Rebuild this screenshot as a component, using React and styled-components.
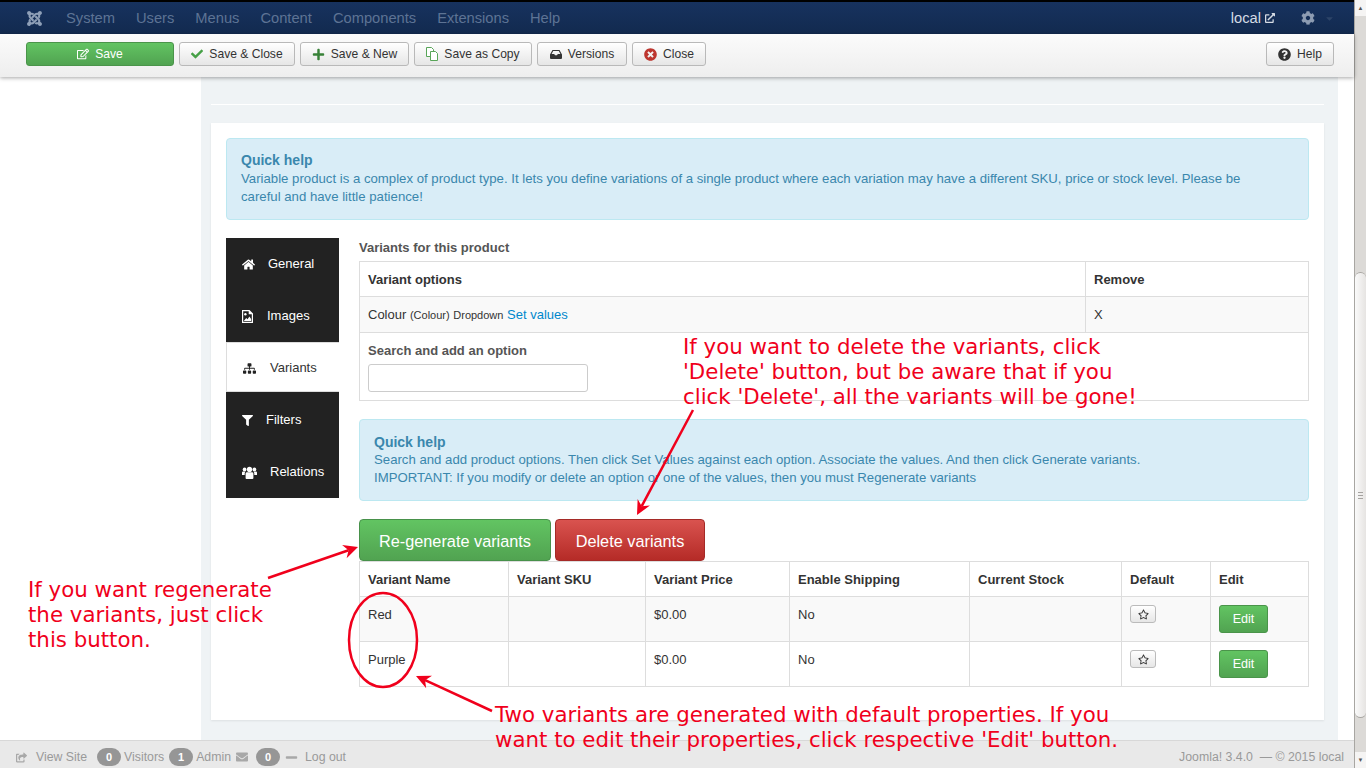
import React from 'react';
import styled, { createGlobalStyle } from 'styled-components';
import {
  FaJoomla, FaCheck, FaPlus, FaTimesCircle, FaQuestionCircle, FaCog,
  FaExternalLinkAlt, FaRegEdit, FaHome, FaSitemap, FaFilter,
  FaRegStar, FaEnvelope, FaMinus, FaShareSquare, FaCaretDown,
} from 'react-icons/fa';

const Global = createGlobalStyle`
html, body { margin: 0; padding: 0; height: 768px; overflow: hidden; background: #fff; }
body { font-family: "Liberation Sans", Arial, sans-serif; font-size: 13px; line-height: 18px; color: #333; }
* { box-sizing: border-box; }
`;

const Page = styled.div`
position: relative;
width: 1366px;
height: 768px;
display: flex;
overflow: hidden;
`;

const Column = styled.div`
width: 1354px;
height: 768px;
display: flex;
flex-direction: column;
`;

const Scrollbar = styled.div`
width: 12px;
height: 768px;
display: flex;
flex-direction: column;
background: #dcdad7;
border-left: 1px solid #a8a6a2;
`;
const ScrollButton = styled.div`
height: 16px;
flex: none;
background: #f5f4f3;
display: flex;
align-items: center;
justify-content: center;
color: #555;
font-size: 6px;
line-height: 1;
`;
const ScrollTrack = styled.div`
flex: 1;
padding: 256px 0 34px;
display: flex;
`;
const ScrollThumb = styled.div`
flex: 1;
border-radius: 6px;
border-top: 1px solid #a8a6a2;
border-bottom: 1px solid #a8a6a2;
background: linear-gradient(90deg, #fafafa, #e6e4e2);
display: flex;
flex-direction: column;
align-items: center;
justify-content: center;
gap: 2px;
`;
const Grip = styled.span`
width: 5px;
height: 1px;
background: #a5a3a0;
`;

const Nav = styled.div`
height: 34px;
flex: none;
border-top: 2px solid #000;
background: linear-gradient(#17325f, #122a4f);
display: flex;
align-items: center;
padding: 0 19px 0 26px;
color: #5d7394;
font-size: 14.7px;
`;
const NavMenu = styled.div`
display: flex;
gap: 21px;
margin-left: 23px;
flex: 1;
`;
const NavLogo = styled(FaJoomla)`
color: #8fa0b8;
font-size: 17px;
`;
const LocalLink = styled.span`
color: #d5dbe4;
display: flex;
align-items: center;
gap: 4px;
margin-right: 26px;
svg { font-size: 10px; }
`;
const NavCog = styled(FaCog)`
color: #8d9cb2;
font-size: 14px;
margin-right: 9px;
`;
const NavCaret = styled(FaCaretDown)`
color: #2c4468;
font-size: 11px;
`;

const Toolbar = styled.div`
height: 43px;
flex: none;
background: linear-gradient(#fbfbfb, #eeeeee);
box-shadow: 0 1px 4px rgba(0, 0, 0, .35);
display: flex;
align-items: center;
gap: 5px;
padding: 0 20px 3px 26px;
position: relative;
z-index: 2;
`;
const ToolButton = styled.div`
height: 24px;
width: ${p => p.$w}px;
display: flex;
align-items: center;
justify-content: center;
gap: 6px;
font-size: 12.1px;
color: ${p => p.$primary ? '#fff' : '#333'};
background: ${p => p.$primary ? 'linear-gradient(#62c462, #51a351)' : 'linear-gradient(#fff, #e6e6e6)'};
border: 1px solid ${p => p.$primary ? '#4a944a' : '#b9b9b9'};
border-radius: 3px;
margin-left: ${p => p.$push ? 'auto' : '0'};
`;
const ToolIcon = styled.span`
display: flex;
font-size: ${p => p.$size || 12}px;
color: ${p => p.$color || 'inherit'};
`;

const Body = styled.div`
flex: 1;
display: flex;
min-height: 0;
`;
const Side = styled.div`
width: 201px;
flex: none;
`;
const Content = styled.div`
width: 1137px;
flex: none;
background: #eff3f5;
padding: 27px 14px 0 10px;
display: flex;
flex-direction: column;
`;
const Rule = styled.div`
height: 1px;
background: #fff;
margin-bottom: 18px;
`;
const Panel = styled.div`
background: #fff;
height: 597px;
padding: 15px;
box-shadow: 0 1px 2px rgba(0, 0, 0, .08);
`;
const Help = styled.div`
background: #d9edf7;
border: 1px solid #bce8f1;
border-radius: 4px;
color: #3a87ad;
padding: ${p => p.$small ? '13px' : '11px'} 35px 0 14px;
height: 82px;
`;
const HelpTitle = styled.div`
font-weight: bold;
font-size: 14px;
line-height: ${p => p.$small ? 18 : 20}px;
`;
const HelpText = styled.div`
font-size: 13.2px;
line-height: 18px;
`;
const Tabbed = styled.div`
display: flex;
gap: 20px;
margin-top: 18px;
`;
const Tabs = styled.div`
width: 113px;
height: 260px;
flex: none;
background: #222;
display: flex;
flex-direction: column;
`;
const Tab = styled.div`
height: ${p => p.$h || 52}px;
display: flex;
align-items: center;
padding: ${p => p.$h ? '2px' : '0'} 0 0 16px;
font-size: 13px;
color: ${p => p.$active ? '#333' : '#fff'};
background: ${p => p.$active ? '#fff' : 'transparent'};
border: ${p => p.$active ? '1px solid #ddd' : 'none'};
border-right: none;
`;
const TabIcon = styled.span`
width: ${p => p.$w}px;
flex: none;
display: flex;
font-size: ${p => p.$size}px;
color: ${p => p.$active ? '#222' : '#fff'};
`;
const TabPane = styled.div`
flex: 1;
min-width: 0;
`;
const PaneTitle = styled.div`
font-weight: bold;
color: #555;
font-size: 13px;
line-height: 18px;
padding-top: 1px;
margin-bottom: 4px;
`;
const Table = styled.table`
width: 100%;
border-collapse: collapse;
table-layout: fixed;
font-size: 13px;
line-height: 18px;
`;
const Th = styled.th`
border: 1px solid #ddd;
padding: 9px 8px 7px;
text-align: left;
font-weight: bold;
width: ${p => p.$w ? p.$w + 'px' : 'auto'};
`;
const Td = styled.td`
border: 1px solid #ddd;
padding: 9px 8px 7px;
vertical-align: top;
`;
const Row = styled.tr`
background: ${p => p.$odd ? '#f9f9f9' : '#fff'};
height: ${p => p.$h}px;
`;
const Small = styled.span`
font-size: 11px;
`;
const LinkText = styled.a`
color: #0088cc;
`;
const FieldLabel = styled.div`
font-weight: bold;
color: #555;
margin-bottom: 4px;
`;
const Input = styled.div`
width: 220px;
height: 28px;
background: #fff;
border: 1px solid #ccc;
border-radius: 3px;
`;
const HelpGap = styled.div`
margin-top: 18px;
`;
const BigButtons = styled.div`
display: flex;
gap: 4px;
margin-top: 18px;
`;
const BigButton = styled.div`
width: ${p => p.$w}px;
height: 42px;
padding-top: 1px;
display: flex;
align-items: center;
justify-content: center;
font-size: 16.3px;
color: #fff;
border-radius: 4px;
background: ${p => p.$danger ? 'linear-gradient(#d9534f, #b52b27)' : 'linear-gradient(#62c462, #51a351)'};
border: 1px solid ${p => p.$danger ? '#a52a27' : '#47914a'};
`;
const StarButton = styled.div`
width: 26px;
height: 18px;
margin-top: -1px;
display: flex;
align-items: center;
justify-content: center;
border: 1px solid #bbb;
border-radius: 3px;
background: linear-gradient(#fff, #e6e6e6);
font-size: 11px;
color: #333;
`;
const EditButton = styled.div`
width: 49px;
height: 28px;
display: flex;
align-items: center;
justify-content: center;
color: #fff;
font-size: 12.6px;
border-radius: 3px;
background: linear-gradient(#62c462, #51a351);
border: 1px solid #4a944a;
`;
const EditCell = styled(Td)`
padding: 8px 8px 0;
`;

const Footer = styled.div`
height: 28px;
flex: none;
background: #e9e9e9;
border-top: 1px solid #d8d8d8;
display: flex;
align-items: center;
padding: 5px 10px 0 16px;
font-size: 12.3px;
color: #9a9a9a;
`;
const FooterIcon = styled.span`
display: flex;
font-size: ${p => p.$size || 11}px;
margin: ${p => p.$margin};
color: #a8a8a8;
`;
const Badge = styled.span`
width: 24px;
height: 18px;
border-radius: 9px;
background: #969696;
color: #fff;
font-size: 11px;
font-weight: bold;
display: flex;
align-items: center;
justify-content: center;
margin: ${p => p.$margin};
`;
const Copy = styled.span`
margin-left: auto;
`;

// red callouts drawn over the page
const Note = styled.div`
position: absolute;
left: ${p => p.$x}px;
top: ${p => p.$y}px;
font-family: "DejaVu Sans", Verdana, sans-serif;
font-size: 21.33px;
line-height: 25px;
color: #f0001c;
white-space: pre;
z-index: 5;
`;
const Overlay = styled.svg`
position: absolute;
left: 0;
top: 0;
z-index: 5;
pointer-events: none;
`;

const VersionsIcon = () => (
  <svg width="12" height="9" viewBox="0 0 12 9">
    <path d="M2.5 0h7L12 4.5V8a1 1 0 0 1-1 1H1a1 1 0 0 1-1-1V4.5zM3.2 1 1.6 4h2.6l.8 1.2h2L7.8 4h2.6L8.8 1z" fill="#333" fillRule="evenodd" />
  </svg>
);

const CopyIcon = () => (
  <svg width="12" height="14" viewBox="0 0 12 14" fill="#fff" stroke="#58a558" strokeWidth="1">
    <path d="M.5.5h5l2 2v7h-7z" />
    <path d="M4.5 4.5h5l2 2v7h-7z" />
  </svg>
);

const ImageFileIcon = () => (
  <svg width="11" height="13" viewBox="0 0 11 13">
    <path d="M0 0h7.5L11 3.5V13H0zM1.2 1.2v10.6h8.6V4.3H6.7V1.2z" fill="#fff" fillRule="evenodd" />
    <circle cx="3.4" cy="4.2" r="1.2" fill="#fff" />
    <path d="M1.8 11l2.4-3 1.3 1.2L7.4 6.6l1.8 2.6V11z" fill="#fff" />
  </svg>
);

const UsersIcon = () => (
  <svg width="15" height="13" viewBox="0 0 15 13" fill="#fff">
    <circle cx="7.5" cy="3.4" r="2.6" />
    <circle cx="2.6" cy="3.4" r="1.9" />
    <circle cx="12.4" cy="3.4" r="1.9" />
    <path d="M3.6 7.6C3.6 6.6 4.6 6.2 5.2 6.2h4.6c.6 0 1.6.4 1.6 1.4V12a1 1 0 0 1-1 1h-6a1 1 0 0 1-.8-1z" />
    <path d="M0 6.6c0-.8.6-1.2 1.2-1.2h2.4c-.5.5-.9 1.2-.9 2.2V9H0zM15 6.6c0-.8-.6-1.2-1.2-1.2h-2.4c.5.5.9 1.2.9 2.2V9H15z" />
  </svg>
);

const Arrow = ({ x1, y1, x2, y2 }) => {
  const a = Math.atan2(y2 - y1, x2 - x1);
  const len = 16;
  const p1 = [x2 - len * Math.cos(a - 0.45), y2 - len * Math.sin(a - 0.45)];
  const p2 = [x2 - len * Math.cos(a + 0.45), y2 - len * Math.sin(a + 0.45)];
  const n = [x2 - 10 * Math.cos(a), y2 - 10 * Math.sin(a)];
  return (
    <g>
      <line x1={x1} y1={y1} x2={n[0]} y2={n[1]} stroke="#f0001c" strokeWidth="2.5" />
      <polygon points={`${x2},${y2} ${p1[0]},${p1[1]} ${n[0]},${n[1]} ${p2[0]},${p2[1]}`} fill="#f0001c" />
    </g>
  );
};

const tools = [
  { label: 'Save & Close', w: 116, icon: <ToolIcon $color="#46a046"><FaCheck /></ToolIcon> },
  { label: 'Save & New', w: 109, icon: <ToolIcon $color="#378137" $size={13}><FaPlus /></ToolIcon> },
  { label: 'Save as Copy', w: 118, icon: <ToolIcon><CopyIcon /></ToolIcon> },
  { label: 'Versions', w: 90, icon: <ToolIcon><VersionsIcon /></ToolIcon> },
  { label: 'Close', w: 74, icon: <ToolIcon $color="#bd362f" $size={13}><FaTimesCircle /></ToolIcon> },
];

const tabs = [
  { label: 'General', w: 26, size: 13, icon: <FaHome /> },
  { label: 'Images', w: 25, size: 13, icon: <ImageFileIcon /> },
  { label: 'Variants', w: 27, size: 13, h: 50, icon: <FaSitemap />, active: true },
  { label: 'Filters', w: 24, size: 11, h: 54, icon: <FaFilter /> },
  { label: 'Relations', w: 28, size: 13, icon: <UsersIcon /> },
];

const variants = ['Red', 'Purple'];

export default function App() {
  return (
    <Page>
      <Global />
      <Column>
        <Nav>
          <NavLogo />
          <NavMenu>
            {['System', 'Users', 'Menus', 'Content', 'Components', 'Extensions', 'Help'].map(m => <span key={m}>{m}</span>)}
          </NavMenu>
          <LocalLink>local <FaExternalLinkAlt /></LocalLink>
          <NavCog />
          <NavCaret />
        </Nav>
        <Toolbar>
          <ToolButton $primary $w={148}><ToolIcon><FaRegEdit /></ToolIcon>Save</ToolButton>
          {tools.map(t => <ToolButton key={t.label} $w={t.w}>{t.icon}{t.label}</ToolButton>)}
          <ToolButton $push $w={68}><ToolIcon $size={13}><FaQuestionCircle /></ToolIcon>Help</ToolButton>
        </Toolbar>
        <Body>
          <Side />
          <Content>
            <Rule />
            <Panel>
              <Help>
                <HelpTitle>Quick help</HelpTitle>
                <HelpText>Variable product is a complex of product type. It lets you define variations of a single product where each variation may have a different SKU, price or stock level. Please be careful and have little patience!</HelpText>
              </Help>
              <Tabbed>
                <Tabs>
                  {tabs.map(t => (
                    <Tab key={t.label} $active={t.active} $h={t.h}>
                      <TabIcon $w={t.w} $size={t.size} $active={t.active}>{t.icon}</TabIcon>
                      {t.label}
                    </Tab>
                  ))}
                </Tabs>
                <TabPane>
                  <PaneTitle>Variants for this product</PaneTitle>
                  <Table>
                    <thead>
                      <tr><Th>Variant options</Th><Th $w={223}>Remove</Th></tr>
                    </thead>
                    <tbody>
                      <Row $odd $h={36}>
                        <Td>Colour <Small>(Colour)</Small> <Small>Dropdown</Small> <LinkText>Set values</LinkText></Td>
                        <Td>X</Td>
                      </Row>
                      <Row $h={68}>
                        <Td colSpan={2}>
                          <FieldLabel>Search and add an option</FieldLabel>
                          <Input />
                        </Td>
                      </Row>
                    </tbody>
                  </Table>
                  <HelpGap>
                    <Help $small>
                      <HelpTitle $small>Quick help</HelpTitle>
                      <HelpText>Search and add product options. Then click Set Values against each option. Associate the values. And then click Generate variants.<br />IMPORTANT: If you modify or delete an option or one of the values, then you must Regenerate variants</HelpText>
                    </Help>
                  </HelpGap>
                  <BigButtons>
                    <BigButton $w={192}>Re-generate variants</BigButton>
                    <BigButton $danger $w={150}>Delete variants</BigButton>
                  </BigButtons>
                  <Table>
                    <thead>
                      <tr>
                        <Th $w={149}>Variant Name</Th>
                        <Th $w={137}>Variant SKU</Th>
                        <Th $w={144}>Variant Price</Th>
                        <Th $w={180}>Enable Shipping</Th>
                        <Th $w={152}>Current Stock</Th>
                        <Th $w={89}>Default</Th>
                        <Th>Edit</Th>
                      </tr>
                    </thead>
                    <tbody>
                      {variants.map((v, i) => (
                        <Row key={v} $odd={i === 0} $h={45}>
                          <Td>{v}</Td>
                          <Td />
                          <Td>$0.00</Td>
                          <Td>No</Td>
                          <Td />
                          <Td><StarButton><FaRegStar /></StarButton></Td>
                          <EditCell><EditButton>Edit</EditButton></EditCell>
                        </Row>
                      ))}
                    </tbody>
                  </Table>
                </TabPane>
              </Tabbed>
            </Panel>
          </Content>
        </Body>
        <Footer>
          <FooterIcon $margin="0 9px 0 0"><FaShareSquare /></FooterIcon>
          View Site
          <Badge $margin="0 3px 0 10px">0</Badge>Visitors
          <Badge $margin="0 3px 0 5px">1</Badge>Admin
          <FooterIcon $size={12} $margin="0 8px 0 5px"><FaEnvelope /></FooterIcon>
          <Badge $margin="0 5px 0 0">0</Badge>
          <FooterIcon $size={13} $margin="0 7px 0 0"><FaMinus /></FooterIcon>
          Log out
          <Copy>Joomla! 3.4.0 &nbsp;— © 2015 local</Copy>
        </Footer>
      </Column>
      <Scrollbar>
        <ScrollButton>▲</ScrollButton>
        <ScrollTrack>
          <ScrollThumb><Grip /><Grip /><Grip /></ScrollThumb>
        </ScrollTrack>
        <ScrollButton>▼</ScrollButton>
      </Scrollbar>
      <Note $x={683} $y={334}>{"If you want to delete the variants, click\n'Delete' button, but be aware that if you\nclick 'Delete', all the variants will be gone!"}</Note>
      <Note $x={28} $y={577}>{"If you want regenerate\nthe variants, just click\nthis button."}</Note>
      <Note $x={495} $y={702}>{"Two variants are generated with default properties. If you\nwant to edit their properties, click respective 'Edit' button."}</Note>
      <Overlay width="1366" height="768">
        <Arrow x1={693} y1={410} x2={637} y2={515} />
        <Arrow x1={268} y1={578} x2={358} y2={547} />
        <Arrow x1={492} y1={711} x2={416} y2={676} />
        <ellipse cx="383" cy="640" rx="34" ry="47" fill="none" stroke="#f0001c" strokeWidth="2.5" />
      </Overlay>
    </Page>
  );
}
